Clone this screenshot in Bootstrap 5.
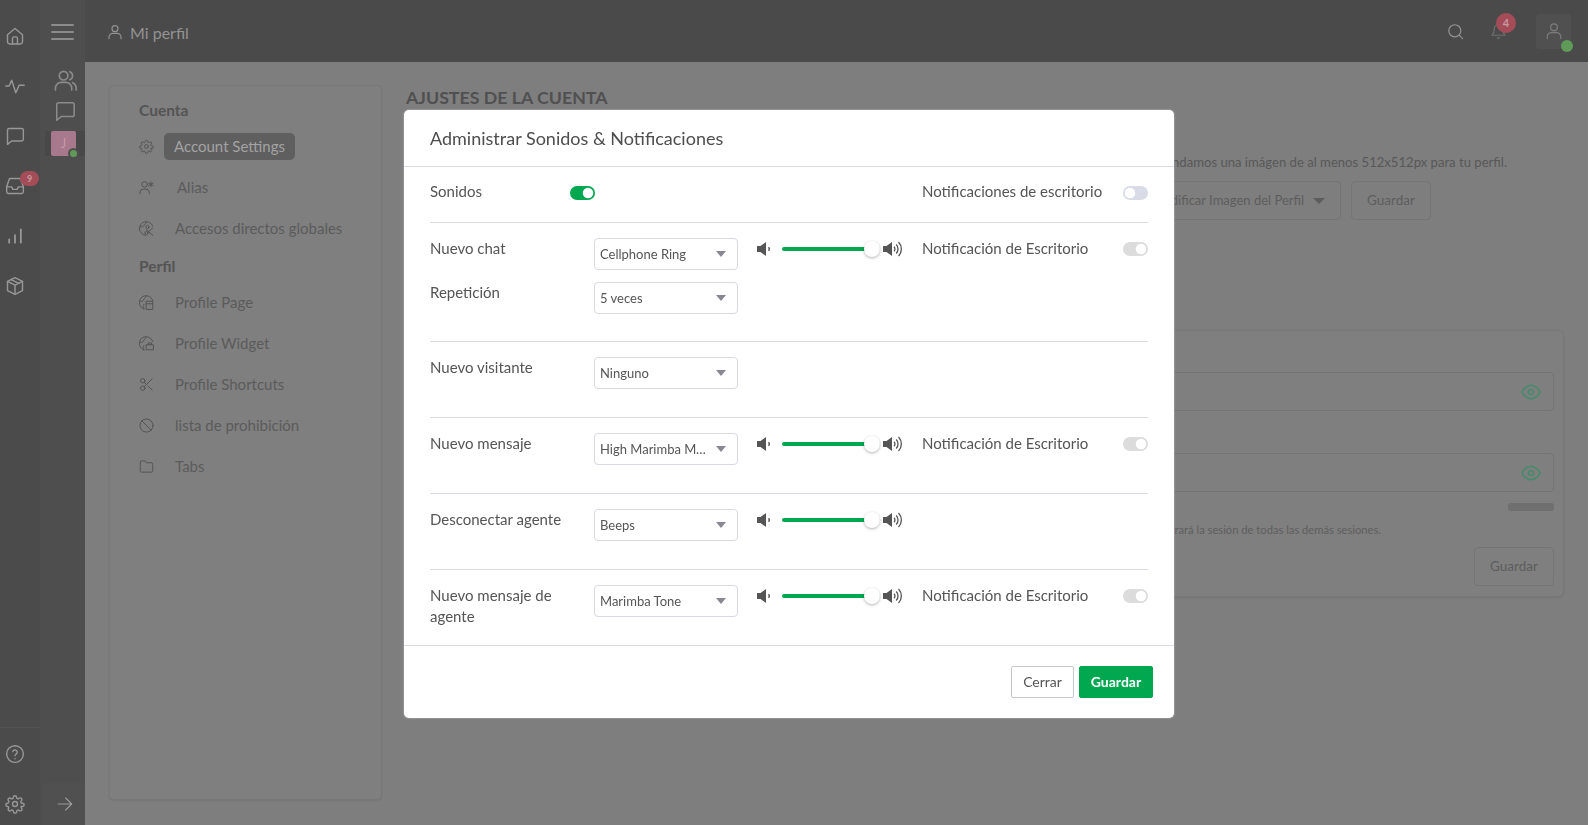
<!DOCTYPE html>
<html lang="es">
<head>
<meta charset="utf-8">
<title>Mi perfil</title>
<link href="https://cdn.jsdelivr.net/npm/bootstrap@5.3.0/dist/css/bootstrap.min.css" rel="stylesheet">
<style>
html,body{height:100%;overflow:hidden}
body{background:#fff;font-family:"Lato",sans-serif;color:#555}
svg.ic{fill:none;stroke:currentColor;stroke-width:1.7;stroke-linecap:round;stroke-linejoin:round;flex:none;display:block}
.app-wrap{width:1588px;height:825px;overflow:hidden;background:#7e7e7e}
.rail-a{width:40px;background:#4b4b4b;color:#979797;padding-top:26px;padding-bottom:11px}
.rail-a .ic{width:20px;height:20px}
.rail-a .ico-stack{gap:30px;padding-left:5px}
.rail-a .ico-foot{gap:30px;border-top:1px solid #525252;padding:16px 0 0 5px}
.rail-b{width:45px;background:#4e4e4e;color:#8b8b8b}
.burger{padding:24px 0 0 11px;height:69px}
.burger i{display:block;width:23px;height:2px;background:#8b8b8b;margin-bottom:5px;border-radius:1px}
.rail-b-icons{padding-left:5px}
.av-row{margin:9px 0 0 5px;padding-left:6px;height:25px;background:#484848}
.av-tile{width:25px;height:25px;background:#a8788c;color:#c59aab;font-size:13px;line-height:25px;text-align:center;border-radius:2px;position:relative}
.av-dot{position:absolute;right:-3px;bottom:-3px;border-radius:50%;background:#5f9a59;border:2px solid #4e4e4e;box-sizing:content-box;width:7px;height:7px}
.back-btn{margin-left:3px;height:42px;background:#505050;padding-left:14px;color:#9a9a9a}
.top-strip{height:62px;background:#4a4a4a;color:#939393;padding:0 17px 0 22px}
.top-user{margin-top:2px}
.top-title{font-size:16px;margin:3px 0 0 7px}
.top-search{margin-right:1px}
.top-bell{margin-left:25px;margin-right:-1px}
.note-badge{position:absolute;top:-9px;left:6px;width:20px;height:20px;border-radius:50%;background:#a44d58;color:#c79aa0;font-size:11px;font-weight:700;line-height:20px;text-align:center}
.inbox-badge{position:absolute;top:-5px;left:15px;width:19px;height:15px;border-radius:8px;background:#a44d58;color:#c79aa0;font-size:9px;font-weight:700;line-height:15px;text-align:center}
.user-box{width:35px;height:35px;background:#505050;border-radius:3px;position:relative;color:#7b7b7b;margin-left:30px}
.user-dot{position:absolute;right:-2px;bottom:-3px;width:12px;height:12px;border-radius:50%;background:#5f9a59}
.side-panel{width:273px;height:715px;background:#7f7f7f;border:1px solid #787878;border-radius:5px;padding:14px 0 0 29px;box-shadow:0 1px 2px rgba(0,0,0,.08)}
.side-head{font-size:15.5px;font-weight:700;line-height:20px;color:#545454;margin-bottom:6px}
.side-head.next-head{margin-top:7px;margin-bottom:5.5px}
.side-item{height:41px;font-size:15px;color:#5b5b5b;gap:21px}
.side-item .ic{width:15px;height:15px;color:#545454;stroke-width:1.6}
.side-pill{background:#5f5f5f;color:#a3a3a3;border-radius:5px;height:27px;line-height:27px;padding:0 10px;margin-left:-11px}
.alias-text{margin-left:2px}
.main-col{width:1158px;margin-left:24px}
.main-title{font-size:17.75px;font-weight:700;line-height:24px;color:#505050;margin:0}
.main-hint{font-size:13.1px;line-height:20px;color:#585858;margin:43px 57px 0 0}
.ghost-btn{height:39px;border:1px solid #747474;border-radius:4px;background:transparent;color:#5d5d5d;font-size:13.5px;padding:0 15px}
.ghost-btn:hover{color:#5d5d5d}
.ghost-fixed{width:80px;padding:0}
.ghost-wide{font-size:13px;gap:9px}
.caret-down{width:0;height:0;border-left:6px solid transparent;border-right:6px solid transparent;border-top:6px solid #5d5d5d}
.pw-card{height:267px;margin-top:110px;background:#7f7f7f;border:1px solid #787878;border-radius:5px;padding:41px 9px 0 0;box-shadow:0 1px 2px rgba(0,0,0,.08)}
.pw-field{height:39px;border:1px solid #747474;border-radius:4px;padding-right:12px;color:#4a8a6c}
.pw-field .ic{width:20px;height:20px;stroke-width:2}
.pw-bar{width:46px;height:8px;background:#6f6f6f;border-radius:3px;margin:11px 0 0 auto}
.pw-note{font-size:11.2px;line-height:16px;color:#5e5e5e;margin:11px 173px 0 0}
.sound-dialog{width:770px;max-width:none;margin:110px 0 0 404px}
.sound-content{height:608px;border:0;border-radius:5px;color:#555;box-shadow:0 0 2px #c9c9d6}
.sound-head{height:57px;padding:0 26px;border-bottom:1px solid #dcdce6;border-radius:0}
.sound-title{font-size:18px;font-weight:400;color:#4e4e4e}
.sound-body{padding:0 26px;flex:1 1 auto}
.sound-top{height:56px;border-bottom:1px solid #dcdce6;padding-top:14px;font-size:15px;line-height:21px}
.sound-top .sw-wrap{margin-top:5px}
.sound-row{padding:15px 0 28px;border-bottom:1px solid #dcdce6;font-size:15px;line-height:21px}
.sound-row.first-row{padding-bottom:27.25px}
.sound-row.last-row{border-bottom:0;padding-bottom:0}
.lbl-a{width:164px;padding-right:20px;flex:none}
.lbl-b{width:201px;flex:none}
.lbl-s{width:140px;flex:none}
.second-line{margin-top:12px}
.sel-box{width:144px;height:32px;flex:none;padding:0 26px 0 5px;font-size:13px;line-height:30px;color:#555;border:1px solid #d9d9e4;border-radius:4px;text-overflow:ellipsis;background-size:10px 6px;background-position:right 11px center;background-image:url("data:image/svg+xml,%3csvg xmlns='http://www.w3.org/2000/svg' viewBox='0 0 10 6'%3e%3cpath fill='%23888892' d='M0 0h10L5 6z'/%3e%3c/svg%3e")}
.vol-box{margin:2.5px 19px 0 19px;width:146px;flex:none;height:16px}
.vol-box svg{display:block;flex:none;fill:#555}
.vol-range{width:98px;height:16px;margin:0 3px 0 11px;padding:0;flex:none}
.vol-range::-webkit-slider-runnable-track{height:4px;background:#02a850;border-radius:2px}
.vol-range::-webkit-slider-thumb{width:16px;height:16px;margin-top:-6px;background:#fff;border:0;border-radius:50%;box-shadow:0 1px 3px rgba(0,0,0,.3);-webkit-appearance:none;appearance:none}
.sw-wrap{min-height:0;padding:0;margin:4px 0 0;width:25px;flex:none;height:14px;line-height:0}
.sw-wrap .form-check-input{width:25px;height:14px;margin:0;border:0;float:none;display:block;background-color:#d9dce7;background-image:url("data:image/svg+xml,%3csvg xmlns='http://www.w3.org/2000/svg' viewBox='-4 -4 8 8'%3e%3ccircle r='3' fill='%23fff'/%3e%3c/svg%3e");box-shadow:none}
.sw-wrap .form-check-input:checked{background-color:#02a850}
.sw-wrap .sw-gray:checked{background-color:#dcdcdc}
.sound-foot{height:73px;padding:0 21px 0 20px;gap:5px;border-top:1px solid #dcdce6;border-radius:0}
.sound-foot>*{margin:0}
.btn-close-s,.btn-save-s{height:32px;font-size:14px;line-height:30px;padding:0;border-radius:2px}
.btn-close-s{width:63px;background:#fff;border:1px solid #c9c9c9;color:#555}
.btn-save-s{width:74px;background:#02a850;border:1px solid #02a850;color:#fff;font-weight:700}
</style>
</head>
<body>
<svg width="0" height="0" class="position-absolute">
<defs>
<symbol id="i-home" viewBox="0 0 24 24"><path d="M3 10.500 12 3l9 7.500V19a2.500 2.500 0 0 1-2.500 2.500h-13A2.500 2.500 0 0 1 3 19z"/><path d="M9 21.500V15a2 2 0 0 1 2-2h2a2 2 0 0 1 2 2v6.500"/></symbol>
<symbol id="i-pulse" viewBox="0 0 24 24"><path d="M1 12h4l3-7 5 15 4-9h6"/></symbol>
<symbol id="i-chat" viewBox="0 0 24 24"><path d="M22 16a2 2 0 0 1-2 2H8l-5 4V5a2 2 0 0 1 2-2h15a2 2 0 0 1 2 2z"/></symbol>
<symbol id="i-inbox" viewBox="0 0 24 24"><path d="M2 13v6a2 2 0 0 0 2 2h16a2 2 0 0 0 2-2v-6l-3-9a2 2 0 0 0-2-1H7a2 2 0 0 0-2 1z"/><path d="M2 13h6l1.500 3h5L16 13h6"/></symbol>
<symbol id="i-bars" viewBox="0 0 24 24"><path d="M5 20v-4M12 20v-9M19 20V4" stroke-width="2.200"/></symbol>
<symbol id="i-box" viewBox="0 0 24 24"><path d="M12 2 3 6.500v11L12 22l9-4.500v-11z"/><path d="M3 6.500 12 11l9-4.500M12 11v11M7.500 4.300l9 4.500"/></symbol>
<symbol id="i-help" viewBox="0 0 24 24"><circle cx="12" cy="12" r="10"/><path d="M9.300 9a2.800 2.800 0 0 1 5.400 1c0 2-2.700 2.500-2.700 4M12 17.500v.1"/></symbol>
<symbol id="i-gear" viewBox="0 0 24 24"><circle cx="12" cy="12" r="3"/><path d="M19.400 15a1.650 1.650 0 0 0 .33 1.820l.06.06a2 2 0 1 1-2.830 2.830l-.06-.06a1.650 1.650 0 0 0-2.820 1.170V21a2 2 0 0 1-4 0v-.09a1.650 1.650 0 0 0-2.820-1.170l-.06.06a2 2 0 1 1-2.830-2.830l.06-.06A1.650 1.650 0 0 0 3.090 15H3a2 2 0 0 1 0-4h.09a1.650 1.650 0 0 0 1.170-2.820l-.06-.06a2 2 0 1 1 2.830-2.830l.06.06A1.650 1.650 0 0 0 9.910 4.180V4a2 2 0 0 1 4 0v.09a1.650 1.650 0 0 0 2.820 1.170l.06-.06a2 2 0 1 1 2.830 2.830l-.06.06A1.650 1.650 0 0 0 20.910 11H21a2 2 0 0 1 0 4h-.09a1.650 1.650 0 0 0-1.510 0z"/></symbol>
<symbol id="i-users" viewBox="0 0 24 24"><circle cx="10" cy="7" r="4.500"/><path d="M1.500 22v-2a6 6 0 0 1 6-6h5a6 6 0 0 1 6 6v2M16.500 2.800a4.500 4.500 0 0 1 0 8.400M19.500 14.300a6 6 0 0 1 3.500 5.700v2"/></symbol>
<symbol id="i-user" viewBox="0 0 24 24"><circle cx="12" cy="7" r="4.500"/><path d="M3 22v-2a6 6 0 0 1 6-6h6a6 6 0 0 1 6 6v2"/></symbol>
<symbol id="i-arrow" viewBox="0 0 24 24"><path d="M2 12h20M13 3l9 9-9 9"/></symbol>
<symbol id="i-search" viewBox="0 0 24 24"><circle cx="11" cy="11" r="8.500"/><path d="m17.500 17.500 4.500 4.500"/></symbol>
<symbol id="i-bell" viewBox="0 0 24 24"><path d="M18 9a6 6 0 0 0-12 0c0 6-3 9-3 9h18s-3-3-3-9zM10.500 21.500l1.500 1 1.500-1"/></symbol>
<symbol id="i-alias" viewBox="0 0 24 24"><circle cx="9" cy="7" r="4.500"/><path d="M1.500 22v-2a5.500 5.500 0 0 1 5.500-5.500h4a5.500 5.500 0 0 1 5.500 5.500v2M19 3v8M15.500 5l7 4M22.500 5l-7 4"/></symbol>
<symbol id="i-global" viewBox="0 0 24 24"><path d="M22 8A11 11 0 1 0 11 23"/><path d="M2 9c3 1 5 0 6-2s3-3 4-5M12 14l10 9M22 11l-8 7"/><circle cx="13.500" cy="9.500" r="2.500"/><circle cx="12" cy="19" r="2.500"/></symbol>
<symbol id="i-page" viewBox="0 0 24 24"><path d="M22 9A11 11 0 1 0 8 22.500"/><path d="M2 10c3 1 4 0 5-2s3-3 4-6M8 22c-2-3-2-5 0-7"/><path d="M12 10h10v13H12zM12 14h10"/></symbol>
<symbol id="i-widget" viewBox="0 0 24 24"><path d="M22 9A11 11 0 1 0 8 22.500"/><path d="M2 10c3 1 4 0 5-2s3-3 4-6M8 22c-2-3-2-5 0-7"/><path d="M12 14h11v8H12zM15 14v-3h5v3"/></symbol>
<symbol id="i-scissors" viewBox="0 0 24 24"><circle cx="6" cy="6" r="3.500"/><circle cx="6" cy="18" r="3.500"/><path d="M21 3 8.500 15.500M14.500 14.500 21 21M8.500 8.500 12 12"/></symbol>
<symbol id="i-ban" viewBox="0 0 24 24"><circle cx="12" cy="12" r="10.500"/><path d="m4.500 4.500 15 15"/></symbol>
<symbol id="i-folder" viewBox="0 0 24 24"><path d="M22 19a2 2 0 0 1-2 2H4a2 2 0 0 1-2-2V5a2 2 0 0 1 2-2h6l2 3h8a2 2 0 0 1 2 2z"/></symbol>
<symbol id="i-eye" viewBox="0 0 24 24"><path d="M1 12s4-8 11-8 11 8 11 8-4 8-11 8-11-8-11-8z"/><circle cx="12" cy="12" r="3"/></symbol>
<symbol id="i-low" viewBox="0 0 14 16"><path d="M0 5h3.500L9 1v14l-5.500-4H0z"/><path d="M11.500 6.200a2.500 2.500 0 0 1 0 3.600" fill="none" stroke="#555" stroke-width="1.500"/></symbol>
<symbol id="i-loud" viewBox="0 0 20 16"><path d="M0 5h3.500L9 1v14l-5.500-4H0z"/><g fill="none" stroke="#555" stroke-width="1.300"><path d="M11 5.800a3 3 0 0 1 0 4.400"/><path d="M13.200 3.500a6.500 6.500 0 0 1 0 9"/><path d="M15.500 1a10 10 0 0 1 0 14"/></g></symbol>
</defs>
</svg>

<div class="app-wrap d-flex">
  <aside class="rail-a d-flex flex-column justify-content-between">
    <div class="ico-stack d-flex flex-column">
      <svg class="ic"><use href="#i-home"/></svg>
      <svg class="ic"><use href="#i-pulse"/></svg>
      <svg class="ic"><use href="#i-chat"/></svg>
      <div class="position-relative"><svg class="ic"><use href="#i-inbox"/></svg><span class="inbox-badge">9</span></div>
      <svg class="ic"><use href="#i-bars"/></svg>
      <svg class="ic"><use href="#i-box"/></svg>
    </div>
    <div class="ico-foot d-flex flex-column w-100">
      <svg class="ic"><use href="#i-help"/></svg>
      <svg class="ic"><use href="#i-gear"/></svg>
    </div>
  </aside>
  <aside class="rail-b d-flex flex-column">
    <div class="burger"><i></i><i></i><i></i></div>
    <div class="rail-b-icons d-flex flex-column align-items-center">
      <svg class="ic" width="23" height="23"><use href="#i-users"/></svg>
      <svg class="ic mt-2" width="22" height="22"><use href="#i-chat"/></svg>
    </div>
    <div class="av-row"><div class="av-tile">J<span class="av-dot"></span></div></div>
    <div class="back-btn mt-auto d-flex align-items-center"><svg class="ic" width="16" height="16"><use href="#i-arrow"/></svg></div>
  </aside>
  <div class="flex-grow-1 d-flex flex-column">
    <header class="top-strip d-flex align-items-center">
      <svg class="ic top-user" width="16" height="16"><use href="#i-user"/></svg>
      <span class="top-title">Mi perfil</span>
      <svg class="ic top-search ms-auto" width="17" height="17"><use href="#i-search"/></svg>
      <div class="position-relative top-bell"><svg class="ic" style="color:#6f6f6f" width="17" height="18"><use href="#i-bell"/></svg><span class="note-badge">4</span></div>
      <div class="user-box d-flex align-items-center justify-content-center"><svg class="ic" width="18" height="18"><use href="#i-user"/></svg><span class="user-dot"></span></div>
    </header>
    <div class="d-flex flex-grow-1" style="padding:23px 0 0 24px">
      <nav class="side-panel flex-none">
        <div class="side-head">Cuenta</div>
        <div class="side-item d-flex align-items-center"><svg class="ic"><use href="#i-gear"/></svg><span class="side-pill">Account Settings</span></div>
        <div class="side-item d-flex align-items-center"><svg class="ic"><use href="#i-alias"/></svg><span class="alias-text">Alias</span></div>
        <div class="side-item d-flex align-items-center"><svg class="ic"><use href="#i-global"/></svg><span>Accesos directos globales</span></div>
        <div class="side-head next-head">Perfil</div>
        <div class="side-item d-flex align-items-center"><svg class="ic"><use href="#i-page"/></svg><span>Profile Page</span></div>
        <div class="side-item d-flex align-items-center"><svg class="ic"><use href="#i-widget"/></svg><span>Profile Widget</span></div>
        <div class="side-item d-flex align-items-center"><svg class="ic"><use href="#i-scissors"/></svg><span>Profile Shortcuts</span></div>
        <div class="side-item d-flex align-items-center"><svg class="ic"><use href="#i-ban"/></svg><span>lista de prohibición</span></div>
        <div class="side-item d-flex align-items-center"><svg class="ic"><use href="#i-folder"/></svg><span>Tabs</span></div>
      </nav>
      <main class="main-col">
        <h1 class="main-title">AJUSTES DE LA CUENTA</h1>
        <p class="main-hint text-end">Recomendamos una imágen de al menos 512x512px para tu perfil.</p>
        <div class="d-flex justify-content-end" style="margin:9px 133px 0 0;gap:10px">
          <button class="ghost-btn ghost-wide btn d-flex align-items-center">Modificar Imagen del Perfil <span class="caret-down"></span></button>
          <button class="ghost-btn ghost-fixed btn">Guardar</button>
        </div>
        <section class="pw-card">
          <div class="pw-field d-flex align-items-center justify-content-end"><svg class="ic"><use href="#i-eye"/></svg></div>
          <div class="pw-field d-flex align-items-center justify-content-end" style="margin-top:42px"><svg class="ic"><use href="#i-eye"/></svg></div>
          <div class="pw-bar"></div>
          <p class="pw-note text-end">Al cambiar tu contraseña se cerrará la sesión de todas las demás sesiones.</p>
          <div class="d-flex justify-content-end" style="margin-top:9px"><button class="ghost-btn ghost-fixed btn">Guardar</button></div>
        </section>
      </main>
    </div>
  </div>
</div>

<div class="modal d-block" tabindex="-1" role="dialog" aria-modal="true">
  <div class="modal-dialog sound-dialog">
    <div class="modal-content sound-content">
      <div class="modal-header sound-head"><h5 class="modal-title sound-title">Administrar Sonidos &amp; Notificaciones</h5></div>
      <div class="modal-body sound-body">
        <div class="sound-top d-flex">
          <span class="lbl-s">Sonidos</span>
          <div class="form-check form-switch sw-wrap"><input class="form-check-input" type="checkbox" role="switch" checked></div>
          <span class="lbl-b ms-auto">Notificaciones de escritorio</span>
          <div class="form-check form-switch sw-wrap"><input class="form-check-input" type="checkbox" role="switch"></div>
        </div>

        <div class="sound-row first-row">
          <div class="d-flex">
            <span class="lbl-a">Nuevo chat</span>
            <select class="form-select sel-box"><option>Cellphone Ring</option></select>
            <div class="vol-box d-flex align-items-center"><svg width="14" height="16"><use href="#i-low"/></svg><input type="range" class="form-range vol-range" min="0" max="100" value="100"><svg width="20" height="16"><use href="#i-loud"/></svg></div>
            <span class="lbl-b">Notificación de Escritorio</span>
            <div class="form-check form-switch sw-wrap"><input class="form-check-input sw-gray" type="checkbox" role="switch" checked></div>
          </div>
          <div class="d-flex second-line">
            <span class="lbl-a">Repetición</span>
            <select class="form-select sel-box"><option>5 veces</option></select>
          </div>
        </div>

        <div class="sound-row d-flex">
          <span class="lbl-a">Nuevo visitante</span>
          <select class="form-select sel-box"><option>Ninguno</option></select>
        </div>

        <div class="sound-row d-flex">
          <span class="lbl-a">Nuevo mensaje</span>
          <select class="form-select sel-box"><option>High Marimba Melody</option></select>
          <div class="vol-box d-flex align-items-center"><svg width="14" height="16"><use href="#i-low"/></svg><input type="range" class="form-range vol-range" min="0" max="100" value="100"><svg width="20" height="16"><use href="#i-loud"/></svg></div>
          <span class="lbl-b">Notificación de Escritorio</span>
          <div class="form-check form-switch sw-wrap"><input class="form-check-input sw-gray" type="checkbox" role="switch" checked></div>
        </div>

        <div class="sound-row d-flex">
          <span class="lbl-a">Desconectar agente</span>
          <select class="form-select sel-box"><option>Beeps</option></select>
          <div class="vol-box d-flex align-items-center"><svg width="14" height="16"><use href="#i-low"/></svg><input type="range" class="form-range vol-range" min="0" max="100" value="100"><svg width="20" height="16"><use href="#i-loud"/></svg></div>
        </div>

        <div class="sound-row last-row d-flex">
          <span class="lbl-a">Nuevo mensaje de agente</span>
          <select class="form-select sel-box"><option>Marimba Tone</option></select>
          <div class="vol-box d-flex align-items-center"><svg width="14" height="16"><use href="#i-low"/></svg><input type="range" class="form-range vol-range" min="0" max="100" value="100"><svg width="20" height="16"><use href="#i-loud"/></svg></div>
          <span class="lbl-b">Notificación de Escritorio</span>
          <div class="form-check form-switch sw-wrap"><input class="form-check-input sw-gray" type="checkbox" role="switch" checked></div>
        </div>
      </div>
      <div class="modal-footer sound-foot">
        <button type="button" class="btn btn-close-s">Cerrar</button>
        <button type="button" class="btn btn-save-s">Guardar</button>
      </div>
    </div>
  </div>
</div>
<script src="https://cdn.jsdelivr.net/npm/bootstrap@5.3.0/dist/js/bootstrap.bundle.min.js"></script>
</body>
</html>
